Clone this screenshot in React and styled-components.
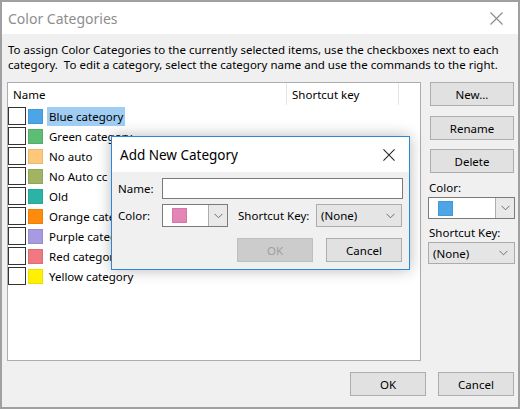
import styled, { createGlobalStyle } from 'styled-components'

const GlobalStyle = createGlobalStyle`
  html, body {
    margin: 0;
    padding: 0;
    background: #a0a0a0;
  }
  * {
    box-sizing: border-box;
  }
`

const categories = [
  { name: 'Blue category', color: '#4ba5e6', selected: true },
  { name: 'Green category', color: '#5cbd74' },
  { name: 'No auto', color: '#fdc87c' },
  { name: 'No Auto cc', color: '#a1b462' },
  { name: 'Old', color: '#2bb4a5' },
  { name: 'Orange category', color: '#ff8b0d' },
  { name: 'Purple category', color: '#a89ae0' },
  { name: 'Red category', color: '#f17880' },
  { name: 'Yellow category', color: '#fff100' },
]

function Chevron() {
  return (
    <svg width="9" height="6" viewBox="0 0 9 6">
      <path d="M0.5 0.8 L4.5 4.8 L8.5 0.8" fill="none" stroke="#6d6d6d" strokeWidth="1" />
    </svg>
  )
}

function CloseIcon({ size = 13, color = '#8a8a8a' }) {
  return (
    <svg width={size} height={size} viewBox="0 0 13 13">
      <path d="M0.5 0.5 L12.5 12.5 M12.5 0.5 L0.5 12.5" stroke={color} strokeWidth="1.1" />
    </svg>
  )
}

function App() {
  return (
    <>
      <GlobalStyle />
      <Window>
        <TitleBar>
          <Title>Color Categories</Title>
          <CloseButton>
            <CloseIcon />
          </CloseButton>
        </TitleBar>
        <Body>
          <Description>
            To assign Color Categories to the currently selected items, use the checkboxes next to each
            category.&nbsp; To edit a category, select the category name and use the commands to the right.
          </Description>
          <Content>
            <ListBox>
              <ListHeader>
                <HeaderCell $width="279px">Name</HeaderCell>
                <HeaderCell $width="112px">Shortcut key</HeaderCell>
                <HeaderCell />
              </ListHeader>
              {categories.map((c) => (
                <Row key={c.name}>
                  <Checkbox />
                  <Swatch $color={c.color} />
                  <RowLabel $selected={c.selected}>{c.name}</RowLabel>
                </Row>
              ))}
            </ListBox>
            <Sidebar>
              <Button $width="84px" $ml="2px">New...</Button>
              <Button $width="84px" $ml="2px" $mt="10px">Rename</Button>
              <Button $width="84px" $ml="2px" $mt="9px">Delete</Button>
              <SideLabel $mt="4px">Color:</SideLabel>
              <ColorPicker $width="87px" $height="22px">
                <PickerFace>
                  <Swatch $color="#4ba5e6" />
                </PickerFace>
                <PickerArrow>
                  <Chevron />
                </PickerArrow>
              </ColorPicker>
              <SideLabel $mt="3px">Shortcut Key:</SideLabel>
              <Combo $width="87px" $height="22px">
                <span>(None)</span>
                <Chevron />
              </Combo>
            </Sidebar>
          </Content>
          <Footer>
            <Button $width="76px">OK</Button>
            <Button $width="76px">Cancel</Button>
          </Footer>
        </Body>

        <Modal>
          <ModalTitleBar>
            <ModalTitle>Add New Category</ModalTitle>
            <CloseButton>
              <CloseIcon size={12} color="#222" />
            </CloseButton>
          </ModalTitleBar>
          <ModalBody>
            <FieldRow>
              <FieldLabel>Name:</FieldLabel>
              <TextInput />
            </FieldRow>
            <FieldRow>
              <FieldLabel>Color:</FieldLabel>
              <ColorPicker $width="66px">
                <PickerFace>
                  <Swatch $color="#e584b6" />
                </PickerFace>
                <PickerArrow>
                  <Chevron />
                </PickerArrow>
              </ColorPicker>
              <FieldLabel $width="78px" $ml="10px">Shortcut Key:</FieldLabel>
              <Combo $width="86px">
                <span>(None)</span>
                <Chevron />
              </Combo>
            </FieldRow>
            <ModalButtons>
              <Button $width="76px" $disabled>OK</Button>
              <Button $width="76px">Cancel</Button>
            </ModalButtons>
          </ModalBody>
        </Modal>
      </Window>
    </>
  )
}

const Window = styled.div`
  position: relative;
  width: 520px;
  height: 409px;
  border: 2px solid #a0a0a0;
  display: flex;
  flex-direction: column;
  font-family: 'Noto Sans', 'Open Sans', sans-serif;
  font-size: 11.5px;
  color: #000;
  background: #f0f0f0;
  overflow: hidden;
`

const TitleBar = styled.div`
  height: 32px;
  background: #fff;
  display: flex;
  align-items: center;
  justify-content: space-between;
  padding: 0 12px 0 6px;
`

const Title = styled.div`
  font-size: 14px;
  color: #8d8d8d;
`

const CloseButton = styled.div`
  display: flex;
  align-items: center;
  justify-content: center;
  width: 20px;
  height: 20px;
`

const Body = styled.div`
  flex: 1;
  display: flex;
  flex-direction: column;
  padding: 8px 3px 8px 5px;
`

const Description = styled.p`
  margin: 0 0 10px 1px;
  line-height: 15px;
`

const Content = styled.div`
  display: flex;
  gap: 7px;
  height: 279px;
`

const ListBox = styled.div`
  flex: 1;
  background: #fff;
  border: 1px solid #adadad;
  display: flex;
  flex-direction: column;
`

const ListHeader = styled.div`
  display: flex;
  height: 22px;
  margin-bottom: 1px;
`

const HeaderCell = styled.div`
  width: ${(p) => p.$width || 'auto'};
  flex: ${(p) => (p.$width ? 'none' : '1')};
  display: flex;
  align-items: center;
  padding-left: 5px;
  border-right: ${(p) => (p.$width ? '1px solid #e5e5e5' : 'none')};
`

const Row = styled.div`
  display: flex;
  align-items: center;
  height: 20px;
`

const Checkbox = styled.div`
  width: 18px;
  height: 18px;
  border: 1px solid #333;
  background: #fff;
`

const Swatch = styled.div`
  width: 15px;
  height: 15px;
  margin-left: 2px;
  background: ${(p) => p.$color};
  box-shadow: inset 0 0 0 1px rgba(0, 0, 0, 0.08);
`

const RowLabel = styled.div`
  margin-left: 4px;
  height: 19px;
  display: flex;
  align-items: center;
  padding: 0 2px;
  white-space: nowrap;
  background: ${(p) => (p.$selected ? '#9fcdf3' : 'transparent')};
`

const Sidebar = styled.div`
  width: 87px;
  display: flex;
  flex-direction: column;
  align-items: flex-start;
`

const Button = styled.div`
  width: ${(p) => p.$width};
  height: 24px;
  margin-top: ${(p) => p.$mt || '0'};
  margin-left: ${(p) => p.$ml || '0'};
  display: flex;
  align-items: center;
  justify-content: center;
  background: ${(p) => (p.$disabled ? '#cccccc' : '#e1e1e1')};
  border: 1px solid ${(p) => (p.$disabled ? '#bfbfbf' : '#adadad')};
  color: ${(p) => (p.$disabled ? '#a0a0a0' : '#000')};
`

const SideLabel = styled.div`
  height: 20px;
  margin-top: ${(p) => p.$mt || '0'};
  display: flex;
  align-items: center;
  padding-left: 1px;
`

const ColorPicker = styled.div`
  width: ${(p) => p.$width};
  height: ${(p) => p.$height || '23px'};
  display: flex;
  border: 1px solid #7a7a7a;
  background: #fff;
`

const PickerFace = styled.div`
  flex: 1;
  display: flex;
  align-items: center;
  padding-left: 7px;
`

const PickerArrow = styled.div`
  width: 19px;
  display: flex;
  align-items: center;
  justify-content: center;
  background: #e9e9e9;
  border-left: 1px solid #adadad;
`

const Combo = styled.div`
  width: ${(p) => p.$width};
  height: ${(p) => p.$height || '23px'};
  display: flex;
  align-items: center;
  justify-content: space-between;
  padding: 0 6px 0 4px;
  background: #e5e5e5;
  border: 1px solid #acacac;
`

const Footer = styled.div`
  display: flex;
  justify-content: flex-end;
  gap: 12px;
  margin-top: 11px;
  padding-right: 1px;
`

const Modal = styled.div`
  position: absolute;
  left: 109px;
  top: 134px;
  width: 299px;
  height: 134px;
  display: flex;
  flex-direction: column;
  background: #f0f0f0;
  border: 1px solid #2b87d8;
  box-shadow: 0 0 14px rgba(0, 0, 0, 0.28);
`

const ModalTitleBar = styled.div`
  height: 35px;
  background: #fff;
  display: flex;
  align-items: center;
  justify-content: space-between;
  padding: 0 10px 0 8px;
`

const ModalTitle = styled.div`
  font-size: 13.5px;
`

const ModalBody = styled.div`
  flex: 1;
  display: flex;
  flex-direction: column;
  padding: 6px 6px 0 6px;
  gap: 5px;
`

const FieldRow = styled.div`
  display: flex;
  align-items: center;
`

const FieldLabel = styled.div`
  width: ${(p) => p.$width || '44px'};
  margin-left: ${(p) => p.$ml || '0'};
  white-space: nowrap;
`

const TextInput = styled.div`
  flex: 1;
  height: 21px;
  background: #fff;
  border: 1px solid #7a7a7a;
`

const ModalButtons = styled.div`
  display: flex;
  justify-content: flex-end;
  gap: 13px;
  margin-top: 6px;
  padding-right: 1px;
`

export default App
